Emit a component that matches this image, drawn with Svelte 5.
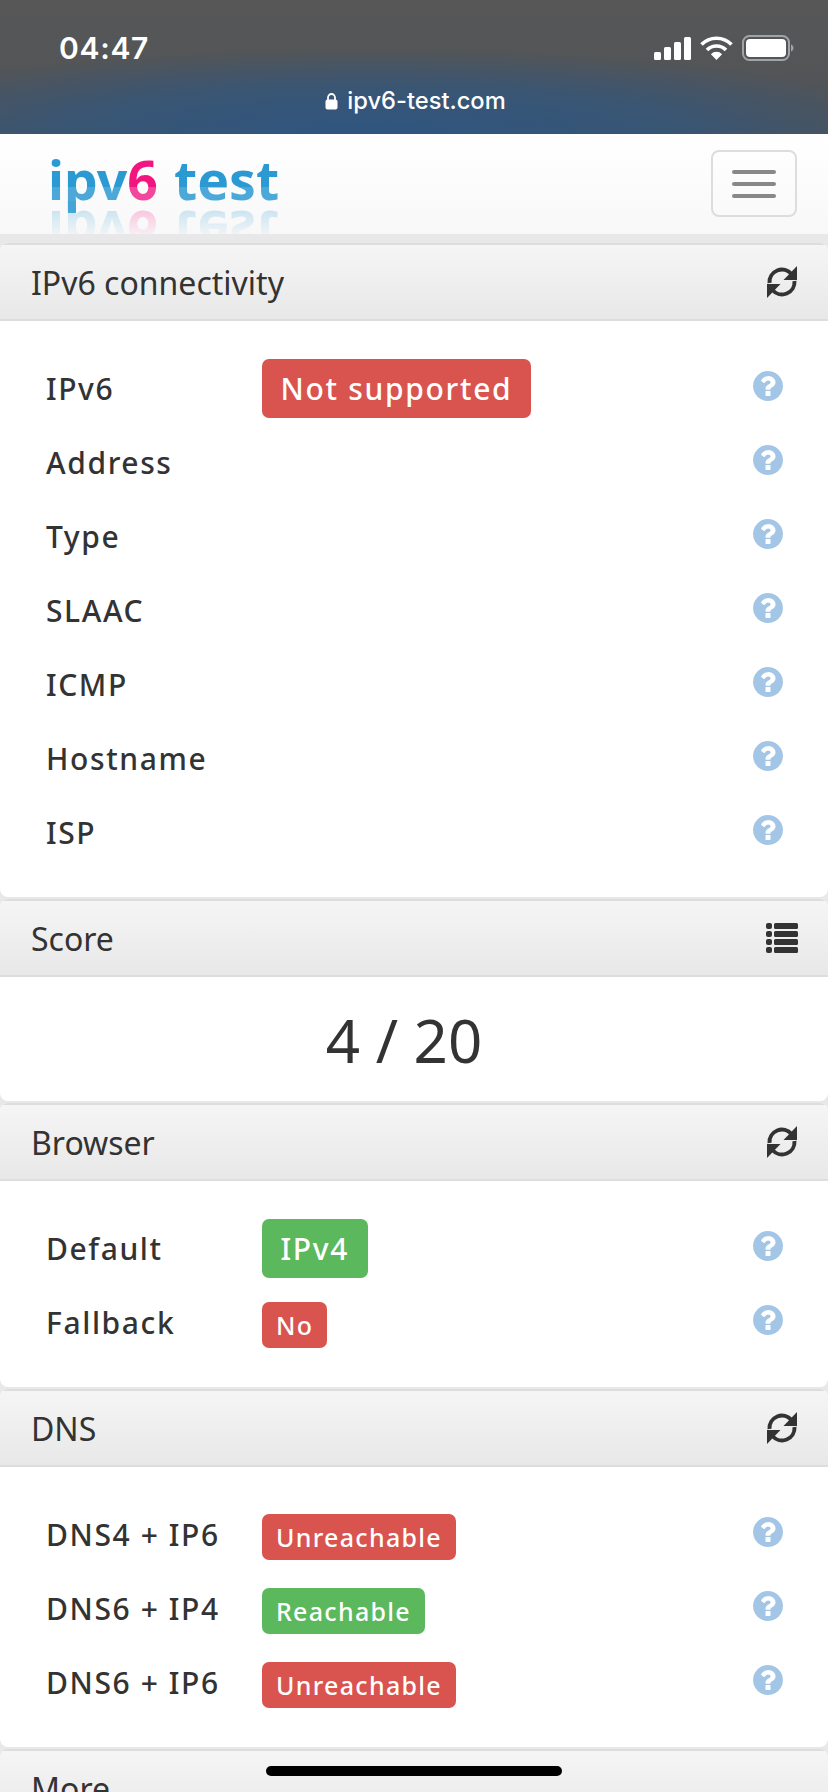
<script>
  const connectivity = ['IPv6','Address','Type','SLAAC','ICMP','Hostname','ISP'];
  const help = "M896 1376v-192q0-14-9-23t-23-9h-192q-14 0-23 9t-9 23v192q0 14 9 23t23 9h192q14 0 23-9t9-23zm256-672q0-88-55.5-163t-138.5-116-170-41q-243 0-371 213-15 24 8 42l132 100q7 6 19 6 16 0 25-12 53-68 86-92 34-24 86-24 48 0 85.5 26t37.5 59q0 38-20 61t-68 45q-63 28-115.5 86.5t-52.5 125.5v36q0 14 9 23t23 9h192q14 0 23-9t9-23q0-19 21.5-49.5t54.5-49.5q32-18 49-28.5t46-35 44.5-48 28-60.5 12.5-81zm384 192q0 209-103 385.5t-279.5 279.5-385.5 103-385.5-103-279.5-279.5-103-385.5 103-385.5 279.5-279.5 385.5-103 385.5 103 279.5 279.5 103 385.5z";
</script>

{#snippet refreshIcon()}
  <svg class="head-icon" viewBox="0 0 30 32" aria-hidden="true">
    <path d="M2.500 17A12.500 12.500 0 0 1 24.500 8" fill="none" stroke="#333" stroke-width="4"/>
    <path d="M30 0V14H16.500z" fill="#333"/>
    <path d="M27.500 15A12.500 12.500 0 0 1 5.500 24" fill="none" stroke="#333" stroke-width="4"/>
    <path d="M0 32V18H13.500z" fill="#333"/>
  </svg>
{/snippet}

{#snippet row(label, badge, size, tone)}
  <div class="row">
    <span class="label">{label}</span>
    {#if badge}<span class="badge {size} {tone}">{badge}</span>{/if}
    <svg class="help" viewBox="0 128 1536 1536" aria-hidden="true"><path d={help} fill="#a4c6e6"/></svg>
  </div>
{/snippet}

<div class="page">
  <header class="status">
    <div class="status-top">
      <span class="time">04:47</span>
      <div class="status-icons">
        <svg width="37" height="23" viewBox="0 0 37 23" aria-hidden="true" fill="#fff">
          <rect x="0" y="15" width="7" height="8" rx="1.500"/><rect x="10" y="10" width="7" height="13" rx="1.500"/><rect x="20" y="5" width="7" height="18" rx="1.500"/><rect x="30" y="0" width="7" height="23" rx="1.500"/>
        </svg>
        <svg width="33" height="24" viewBox="0 0 33 24" aria-hidden="true" fill="none" stroke="#fff" stroke-width="3.600">
          <path d="M1.500 8.500a21 21 0 0 1 30 0"/><path d="M7 14a13.200 13.200 0 0 1 19 0"/><path d="M16.500 24l-5.600-5.800a7.800 7.800 0 0 1 11.200 0z" fill="#fff" stroke="none"/>
        </svg>
        <svg width="52" height="26" viewBox="0 0 52 26" aria-hidden="true">
          <rect x="1" y="1" width="46" height="24" rx="6.500" fill="none" stroke="#a0a4a8" stroke-width="2"/>
          <rect x="4" y="4" width="40" height="18" rx="4" fill="#fff"/>
          <path d="M49 9.500c1.500.4 2.500 2 2.500 3.500s-1 3.100-2.500 3.500z" fill="#a0a4a8"/>
        </svg>
      </div>
    </div>
    <div class="url">
      <svg width="13" height="17" viewBox="0 0 13 17" aria-hidden="true"><path d="M3 7V4.500a3.500 3.500 0 0 1 7 0V7" fill="none" stroke="#fff" stroke-width="1.800"/><rect x="0.500" y="6.500" width="12" height="10" rx="2" fill="#fff"/></svg>
      <span>ipv6-test.com</span>
    </div>
  </header>

  <nav class="navbar">
    <div class="logo">
      <div class="logo-text"><span class="blue">ipv</span><span class="pink">6</span><span class="blue word">test</span></div>
      <div class="logo-reflect" aria-hidden="true"><span class="blue">ipv</span><span class="pink">6</span><span class="blue word">test</span></div>
    </div>
    <button class="toggle" aria-label="Menu"><i></i><i></i><i></i></button>
  </nav>

  <main class="panels">
    <section class="panel">
      <div class="head"><span>IPv6 connectivity</span>{@render refreshIcon()}</div>
      <div class="body">
        {#each connectivity as c, i}
          {@render row(c, i === 0 ? 'Not supported' : '', 'lg', 'red')}
        {/each}
      </div>
    </section>

    <section class="panel">
      <div class="head"><span>Score</span>
        <svg class="list-icon" viewBox="0 0 32 30" aria-hidden="true" fill="#333">
          {#each [0,8,16,24] as y}
            <rect x="0" y={y} width="6" height="6" rx="2"/><rect x="8" y={y} width="24" height="6" rx="1.500"/>
          {/each}
        </svg>
      </div>
      <div class="score">4 / 20</div>
    </section>

    <section class="panel">
      <div class="head"><span>Browser</span>{@render refreshIcon()}</div>
      <div class="body">
        {@render row('Default', 'IPv4', 'lg', 'green')}
        {@render row('Fallback', 'No', 'sm', 'red')}
      </div>
    </section>

    <section class="panel">
      <div class="head"><span>DNS</span>{@render refreshIcon()}</div>
      <div class="body">
        {@render row('DNS4 + IP6', 'Unreachable', 'sm', 'red')}
        {@render row('DNS6 + IP4', 'Reachable', 'sm', 'green')}
        {@render row('DNS6 + IP6', 'Unreachable', 'sm', 'red')}
      </div>
    </section>

    <section class="panel">
      <div class="head"><span>More</span></div>
    </section>
  </main>

  <div class="home"></div>
</div>

<style>
  :global(body) { margin: 0; background: #e8e8e8; }
  .page {
    position: relative;
    width: 828px;
    height: 1792px;
    overflow: hidden;
    background: #e8e8e8;
    font-family: "Noto Sans", "Open Sans", sans-serif;
    color: #333;
  }
  .status {
    box-sizing: border-box;
    height: 134px;
    padding: 32px 34px 0 59px;
    background:
      radial-gradient(ellipse 560px 85px at 45% 134px, #2f5680 0%, rgba(47,86,128,0.7) 55%, rgba(47,86,128,0) 100%),
      linear-gradient(#575757, #4f5357);
    color: #fff;
  }
  .status-top { display: flex; justify-content: space-between; align-items: center; height: 32px; }
  .time { font-family: Inter, sans-serif; font-weight: 600; font-size: 30px; letter-spacing: 0.7px; }
  .status-icons { display: flex; align-items: center; gap: 9px; }
  .url {
    display: flex; justify-content: center; align-items: center; gap: 9px;
    margin-top: 23px; margin-left: -22px;
    font-family: Inter, sans-serif; font-size: 23.700px; font-weight: 500; line-height: 28px;
  }
  .navbar {
    box-sizing: border-box;
    height: 100px;
    padding: 16px 31px 17px 48px;
    display: flex; justify-content: space-between; align-items: flex-start;
    background: linear-gradient(#fff, #f8f8f8);
  }
  .logo { position: relative; height: 84px; overflow: hidden; font-weight: 700; font-size: 53.500px; line-height: 60px; white-space: nowrap; }
  .word { margin-left: 16px; }
  .logo-text .blue { background: linear-gradient(#2b9ad2 60%, #4ba8d8 60%); -webkit-background-clip: text; background-clip: text; color: transparent; }
  .logo-text .pink { background: linear-gradient(#f2147f 60%, #f2479a 60%); -webkit-background-clip: text; background-clip: text; color: transparent; }
  .logo-reflect { transform: scaleY(-1); margin-top: -9px; opacity: 0.22; -webkit-mask-image: linear-gradient(transparent 35%, #000 85%); mask-image: linear-gradient(transparent 35%, #000 85%); }
  .logo-reflect .blue { color: #2b9ad2; }
  .logo-reflect .pink { color: #f2147f; }
  .toggle {
    box-sizing: border-box;
    width: 86px; height: 67px;
    margin: 0; padding: 0;
    border: 2px solid #ddd; border-radius: 8px;
    background: transparent;
    display: flex; flex-direction: column; align-items: center; justify-content: center; gap: 8px;
  }
  .toggle i { display: block; width: 44px; height: 4px; border-radius: 2px; background: #888; }
  .panels { padding-top: 9px; display: flex; flex-direction: column; gap: 2px; }
  .panel { background: #fff; border-radius: 8px; overflow: hidden; }
  .head {
    box-sizing: border-box;
    height: 78px;
    padding: 0 31px;
    display: flex; justify-content: space-between; align-items: center;
    border-top: 2px solid #ddd;
    border-bottom: 2px solid #ddd;
    background: linear-gradient(#f5f5f5, #e8e8e8);
    font-size: 32px;
  }
  .head-icon { width: 30px; height: 32px; }
  .list-icon { width: 32px; height: 30px; margin-right: -1px; }
  .body { padding: 30px 0 28px; }
  .row {
    box-sizing: border-box;
    height: 74px;
    padding: 0 46px;
    display: flex; align-items: center;
  }
  .label { width: 216px; flex: none; font-size: 30px; font-weight: 500; letter-spacing: 1.600px; }
  .badge { border-radius: 7px; color: #fff; font-weight: 500; white-space: nowrap; box-sizing: border-box; display: flex; align-items: center; }
  .lg { height: 59px; padding: 0 18.500px; font-size: 30px; letter-spacing: 1.700px; }
  .sm { height: 46px; padding: 0 14px; font-size: 25px; letter-spacing: 1.300px; margin-top: 6px; }
  .red { background: #d9534f; }
  .green { background: #5cb85c; }
  .help { width: 30px; height: 30px; margin-left: auto; margin-right: -1px; margin-top: -4px; }
  .score { height: 125px; display: flex; align-items: center; justify-content: center; font-size: 60px; padding-right: 20px; margin-bottom: -1px; }
  .home { position: absolute; left: 266px; top: 1766px; width: 296px; height: 10px; border-radius: 5px; background: #000; }
</style>
